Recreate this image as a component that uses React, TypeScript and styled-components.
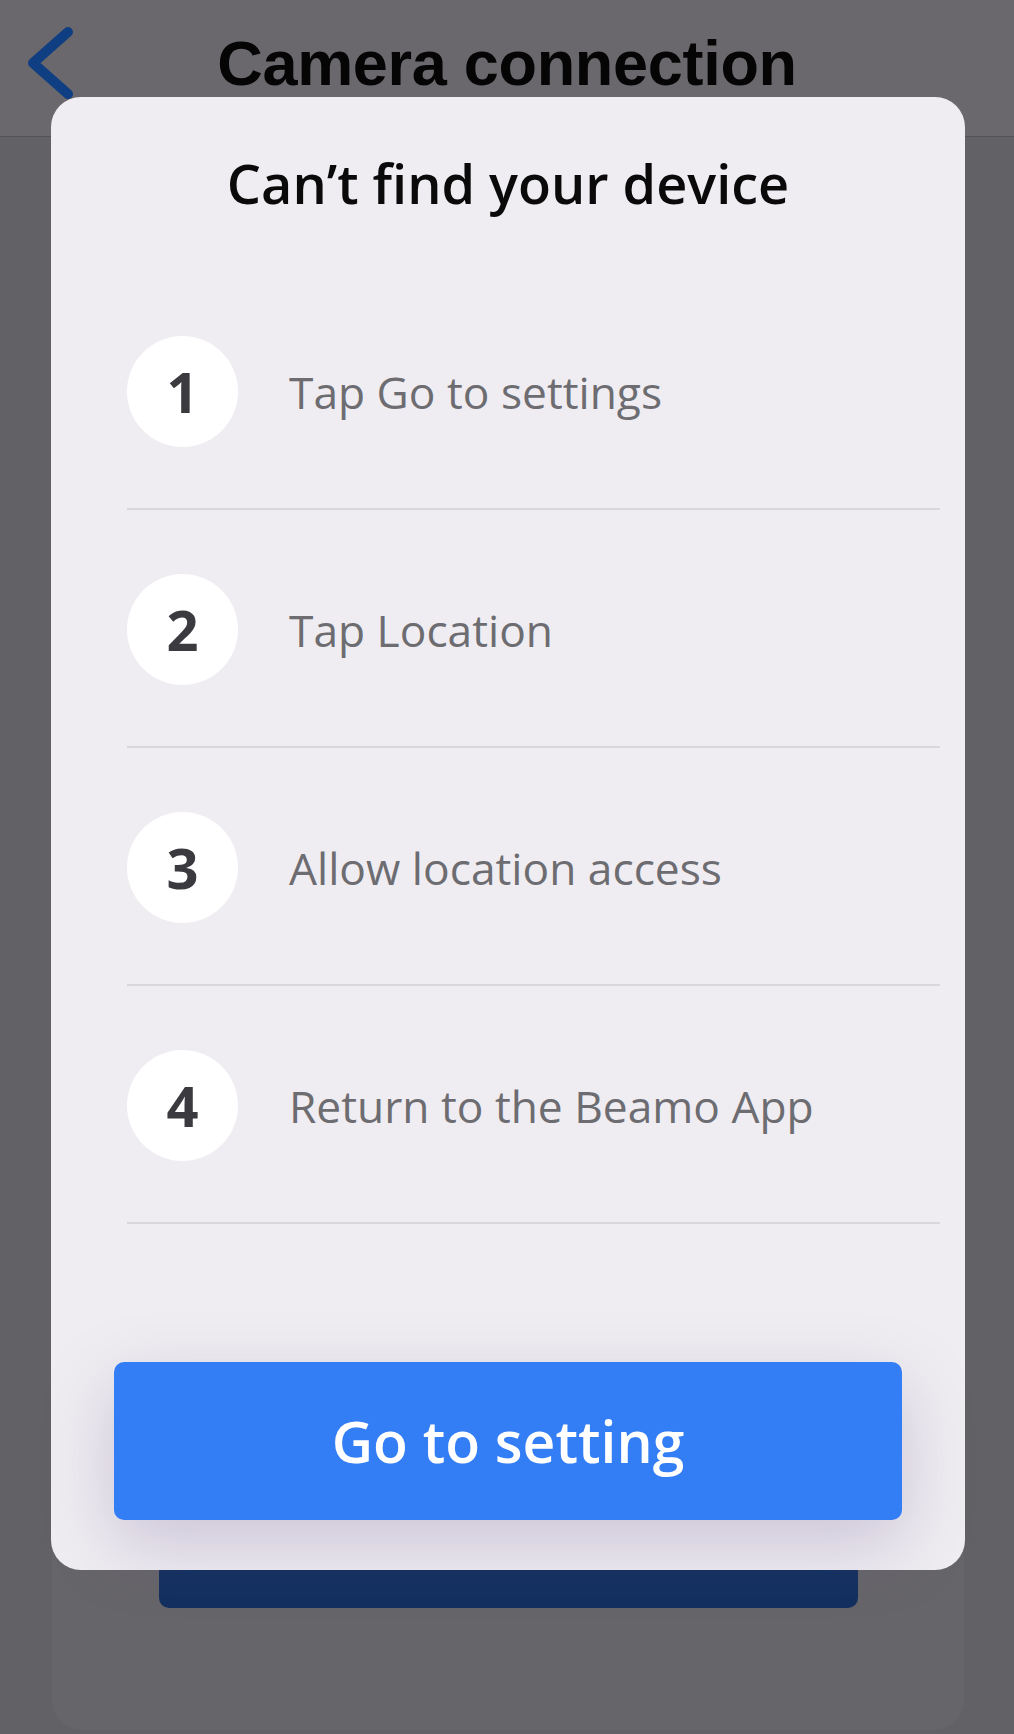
import React from "react";
import styled, { createGlobalStyle } from "styled-components";

const Global = createGlobalStyle`
  html, body { margin: 0; padding: 0; }
  body { background: #636266; font-family: "Open Sans", "Liberation Sans", sans-serif; }
`;

const Page = styled.div`
  position: relative;
  width: 1014px;
  height: 1734px;
  overflow: hidden;
  display: flex;
  flex-direction: column;
  background: #626165;
`;

const Header = styled.header`
  height: 137px;
  box-sizing: border-box;
  display: grid;
  grid-template-columns: 1fr auto 1fr;
  align-items: start;
  padding: 20px 0 0 20px;
  background: #6a686c;
  border-bottom: 1px solid #545357;
`;

const Title = styled.h1`
  margin: 7px 0 0 -20px;
  font-family: "Liberation Sans", Arial, sans-serif;
  font-weight: 700;
  font-size: 63px;
  line-height: 72px;
  color: #050505;
  letter-spacing: -0.3px;
`;

const Body = styled.div`
  flex: 1;
  display: flex;
  padding: 0 50px 0 52px;
`;

const BackCard = styled.div`
  flex: 1;
  display: flex;
  flex-direction: column;
  justify-content: flex-end;
  padding: 0 106px 122px 107px;
  background: #666569;
  border-radius: 0 0 30px 30px;
  margin-bottom: 4px;
`;

const NavyButton = styled.div`
  height: 140px;
  background: #12305f;
  border-radius: 10px;
`;

const Modal = styled.div`
  position: absolute;
  left: 51px;
  top: 97px;
  width: 914px;
  height: 1473px;
  box-sizing: border-box;
  background: #efedf1;
  border-radius: 30px;
  display: flex;
  flex-direction: column;
  padding: 49px 0 50px 0;
`;

const ModalTitle = styled.h2`
  margin: 0;
  text-align: center;
  font-family: "Open Sans", sans-serif;
  font-weight: 600;
  font-size: 54px;
  line-height: 75px;
  color: #0a0a0a;
`;

const Steps = styled.ol`
  list-style: none;
  margin: 51px 25px 0 76px;
  padding: 0;
`;

const Step = styled.li`
  height: 238px;
  box-sizing: border-box;
  display: flex;
  align-items: center;
  gap: 51px;
  border-bottom: 2px solid #d9d7dc;
`;

const Circle = styled.div`
  width: 111px;
  height: 111px;
  flex: none;
  border-radius: 50%;
  background: #ffffff;
  display: flex;
  align-items: center;
  justify-content: center;
  font-family: "Open Sans", sans-serif;
  font-weight: 700;
  font-size: 56px;
  color: #3b3a3e;
  margin-top: 2px;
`;

const StepText = styled.span`
  margin-top: 4px;
  font-family: "Open Sans", sans-serif;
  font-weight: 400;
  font-size: 44.3px;
  color: #6d6c71;
`;

const Spacer = styled.div`
  flex: 1;
`;

const PrimaryButton = styled.button`
  margin: 0 63px;
  height: 158px;
  border: none;
  border-radius: 10px;
  background: #337df5;
  color: #ffffff;
  font-family: "Open Sans", sans-serif;
  font-weight: 600;
  font-size: 57px;
  box-shadow: 0 24px 70px rgba(110, 90, 150, 0.28);
  cursor: pointer;
`;

const steps = [
  "Tap Go to settings",
  "Tap Location",
  "Allow location access",
  "Return to the Beamo App",
];

export default function App() {
  return (
    <>
      <Global />
      <Page>
        <Header>
          <svg width="60" height="90" viewBox="0 0 60 90">
            <polyline
              points="48,12 13,43 48,74"
              fill="none"
              stroke="#0f3f82"
              strokeWidth="10"
              strokeLinecap="round"
              strokeLinejoin="round"
            />
          </svg>
          <Title>Camera connection</Title>
          <div />
        </Header>
        <Body>
          <BackCard>
            <NavyButton />
          </BackCard>
        </Body>
        <Modal>
          <ModalTitle>Can’t find your device</ModalTitle>
          <Steps>
            {steps.map((s, i) => (
              <Step key={s}>
                <Circle>{i + 1}</Circle>
                <StepText>{s}</StepText>
              </Step>
            ))}
          </Steps>
          <Spacer />
          <PrimaryButton>Go to setting</PrimaryButton>
        </Modal>
      </Page>
    </>
  );
}
